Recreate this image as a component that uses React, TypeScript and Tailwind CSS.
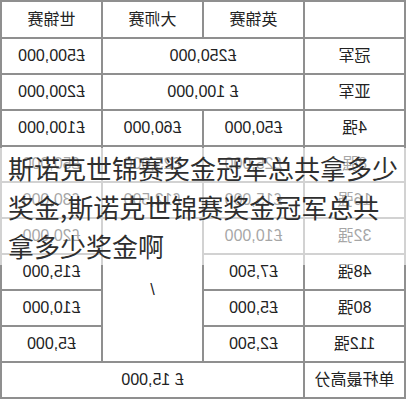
import React from "react";

type Cell = { text: string; colSpan?: number; rowSpan?: number };

// rows are written in reading order; the whole table is flipped afterwards
const rows: Cell[][] = [
  [{ text: "" }, { text: "英锦赛" }, { text: "大师赛" }, { text: "世锦赛" }],
  [{ text: "冠军" }, { text: "£250,000", colSpan: 2 }, { text: "£500,000" }],
  [{ text: "亚军" }, { text: "£ 100,000", colSpan: 2 }, { text: "£200,000" }],
  [{ text: "4强" }, { text: "£50,000" }, { text: "£60,000" }, { text: "£100,000" }],
  [{ text: "8强" }, { text: "£25,000" }, { text: "£25,000" }, { text: "£50,000" }],
  [{ text: "16强" }, { text: "£15,000" }, { text: "£12,500" }, { text: "£30,000" }],
  [{ text: "32强" }, { text: "£10,000" }, { text: "/", rowSpan: 4 }, { text: "£20,000" }],
  [{ text: "48强" }, { text: "£7,500" }, { text: "£15,000" }],
  [{ text: "80强" }, { text: "£5,000" }, { text: "£10,000" }],
  [{ text: "112强" }, { text: "£2,500" }, { text: "£5,000" }],
  [{ text: "单杆最高分" }, { text: "£ 15,000", colSpan: 3 }],
];

const cellClass =
  "border-2 border-[#8f8f8f] text-center align-middle text-[16px] text-[#222] font-normal p-0";

export default function App() {
  return (
    <div className="relative w-[407px] h-[400px] overflow-hidden bg-white">
      <div className="w-[406px] -scale-x-100 [font-family:'Liberation_Sans','Noto_Sans_CJK_SC',sans-serif]">
        <table className="w-[406px] table-fixed border-collapse">
          <tbody>
            {rows.map((row, i) => (
              <tr key={i} className={i === 0 ? "h-[37px]" : "h-[36px]"}>
                {row.map((cell, j) => (
                  <td
                    key={j}
                    colSpan={cell.colSpan}
                    rowSpan={cell.rowSpan}
                    className={cellClass}
                  >
                    {cell.text}
                  </td>
                ))}
              </tr>
            ))}
          </tbody>
        </table>
      </div>

      <p className="absolute left-0 top-[148px] w-full pl-[8px] bg-white/60 text-[26px] leading-[39px] text-[#2e2e2e] [font-family:'Noto_Sans_CJK_SC',sans-serif]">
        斯诺克世锦赛奖金冠军总共拿多少
        <br />
        奖金,斯诺克世锦赛奖金冠军总共
        <br />
        拿多少奖金啊
      </p>
    </div>
  );
}
